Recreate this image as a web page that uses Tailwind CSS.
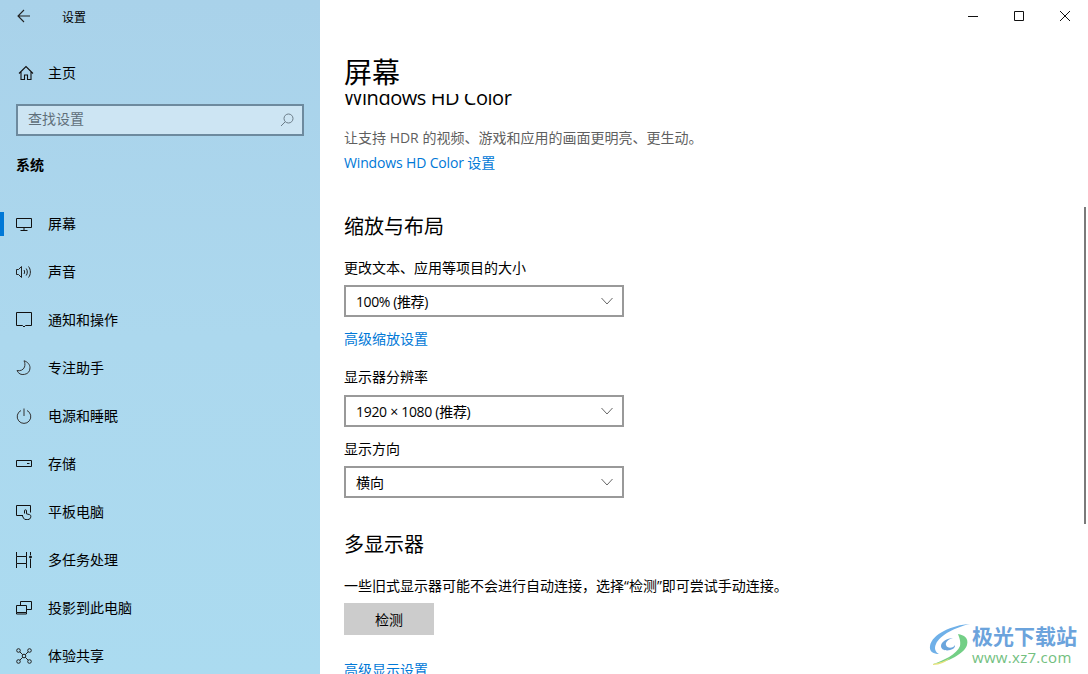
<!DOCTYPE html>
<html lang="zh-CN">
  <head>
    <meta charset="UTF-8" />
    <title>设置</title>
    <script src="https://cdn.jsdelivr.net/npm/@tailwindcss/browser@4"></script>
  </head>
  <body class="relative flex h-[674px] w-[1088px] overflow-hidden bg-white font-['Open_Sans','Noto_Sans_CJK_SC',sans-serif] text-[14px] text-black">
    <!-- sidebar -->
    <aside class="flex h-full w-[320px] shrink-0 flex-col overflow-hidden bg-linear-to-b from-[#a9d2ea] via-[#acd8ee] to-[#abdbf0]">
      <div class="flex h-8 shrink-0 items-center">
        <svg class="ml-[17px] h-[14px] w-[14px]" viewBox="0 0 14 14" fill="none" stroke="#222" stroke-width="1.1"><path d="M13 7H1.500M7 1 1 7l6 6" /></svg>
        <span class="ml-[31px] mt-[3px] text-[12px]">设置</span>
      </div>
      <div class="mt-[17px] flex h-[48px] items-center pl-[18px] shrink-0">
        <svg class="h-4 w-4" viewBox="0 0 16 16" fill="none" stroke="#111" stroke-width="1.1"><path d="M1 8.500 8 1.500l7 7M3 7v7.500h3.500V10h3v4.500H13V7" /></svg>
        <span class="ml-[14px] -mt-[2px]">主页</span>
      </div>
      <div class="mx-4 mt-[7px] flex h-[32px] shrink-0 items-center justify-between border-2 border-[#6d8a9e] bg-[#cde5f3] pl-[10px] pr-2">
        <span class="-mt-[4px] text-[#5f6f7a]">查找设置</span>
        <svg class="h-[14px] w-[14px]" viewBox="0 0 14 14" fill="none" stroke="#6b7c88" stroke-width="1"><circle cx="8.500" cy="5.500" r="4.500" /><path d="M5.200 8.800 1 13" /></svg>
      </div>
      <div class="ml-4 mt-[19px] h-5 shrink-0 text-[14px] leading-5 font-bold">系统</div>
      <nav class="mt-[25px] flex flex-col">
        <a class="relative flex h-12 shrink-0 items-center pl-4">
          <span class="absolute top-3 left-0 h-6 w-1 bg-[#0078d7]"></span>
          <svg class="h-4 w-4" viewBox="0 0 16 16" fill="none" stroke="#111" stroke-width="1"><path d="M.5 2.500h15v9H.5zM8 11.500v3M4.500 14.500h7" /></svg>
          <span class="ml-4 -mt-[2px]">屏幕</span>
        </a>
        <a class="flex h-12 shrink-0 items-center pl-4">
          <svg class="h-4 w-4" viewBox="0 0 16 16" fill="none" stroke="#222" stroke-width="1"><path d="M.5 5.500h2l3-3v11l-3-3h-2zM8 6c.8 1.200.8 2.800 0 4M10.200 4.500c1.500 2 1.500 5 0 7M12.500 2.500c2.500 3 2.500 8 0 11" /></svg>
          <span class="ml-4 -mt-[2px]">声音</span>
        </a>
        <a class="flex h-12 shrink-0 items-center pl-4">
          <svg class="h-4 w-4" viewBox="0 0 16 16" fill="none" stroke="#111" stroke-width="1"><path d="M.5.500h15v13H9.500L8 15l-1.500-1.500H.5z" /></svg>
          <span class="ml-4 -mt-[2px]">通知和操作</span>
        </a>
        <a class="flex h-12 shrink-0 items-center pl-4">
          <svg class="h-4 w-4" viewBox="0 0 16 16" fill="none" stroke="#333" stroke-width="1"><path d="M8 .8c3.200.8 6 3.500 6 7a6.800 6.800 0 0 1-13 2.700c3 .8 6.500-.5 7.500-3.500C9.200 4.800 9 2.500 8 .8Z" /></svg>
          <span class="ml-4 -mt-[2px]">专注助手</span>
        </a>
        <a class="flex h-12 shrink-0 items-center pl-4">
          <svg class="h-4 w-4" viewBox="0 0 16 16" fill="none" stroke="#333" stroke-width="1"><path d="M8 .5v7.500M5 2.500a6.800 6.800 0 1 0 6 0" /></svg>
          <span class="ml-4 -mt-[2px]">电源和睡眠</span>
        </a>
        <a class="flex h-12 shrink-0 items-center pl-4">
          <svg class="h-4 w-4" viewBox="0 0 16 16" fill="none" stroke="#111" stroke-width="1"><path d="M.5 4.500h15v6H.5zM11 7.500h2.500" /></svg>
          <span class="ml-4 -mt-[2px]">存储</span>
        </a>
        <a class="flex h-12 shrink-0 items-center pl-4">
          <svg class="h-4 w-4" viewBox="0 0 16 16" fill="none" stroke="#111" stroke-width="1"><path d="M7 11.500H.5v-10h14v7M8.500 9.500V6.800a1 1 0 0 1 2 0v3l3 .8c1 .3 1.500 1 1.300 2l-.3 1.200a2.800 2.800 0 0 1-2.700 1.800H10a3 3 0 0 1-2.500-1.500L6.500 12" /></svg>
          <span class="ml-4 -mt-[2px]">平板电脑</span>
        </a>
        <a class="flex h-12 shrink-0 items-center pl-4">
          <svg class="h-4 w-4" viewBox="0 0 16 16" fill="none" stroke="#111" stroke-width="1"><path d="M.5 0v4.500h10V0M.5 4.500v7h10v-7M.5 16v-4.500M10.500 16v-4.500M14.500 0v3M14.500 7v9" /><circle cx="14.500" cy="5" r="1" fill="#111" /></svg>
          <span class="ml-4 -mt-[2px]">多任务处理</span>
        </a>
        <a class="flex h-12 shrink-0 items-center pl-4">
          <svg class="h-4 w-4" viewBox="0 0 16 16" fill="none" stroke="#111" stroke-width="1"><path d="M4.500 5V1.500h11v8H11M.5 5.500h10v7H.5zM.5 12.500v1.500h10v-1.500" /></svg>
          <span class="ml-4 -mt-[2px]">投影到此电脑</span>
        </a>
        <a class="flex h-12 shrink-0 items-center pl-4">
          <svg class="h-4 w-4" viewBox="0 0 16 16" fill="none" stroke="#222" stroke-width="1"><circle cx="2.500" cy="2.500" r="1.800" /><circle cx="13.500" cy="2.500" r="1.800" /><circle cx="2.500" cy="13.500" r="1.800" /><circle cx="13.500" cy="13.500" r="1.800" /><circle cx="8" cy="8" r="1.800" /><path d="m3.800 3.800 3 3M12.200 3.800l-3 3M3.800 12.200l3-3M12.200 12.200l-3-3" /></svg>
          <span class="ml-4 -mt-[2px]">体验共享</span>
        </a>
      </nav>
    </aside>

    <!-- main pane -->
    <main class="flex h-full min-w-0 flex-1 flex-col">
      <div class="flex h-8 shrink-0 justify-end">
        <button class="flex h-8 w-[46px] items-center justify-center"><svg class="h-[10px] w-[10px]" viewBox="0 0 10 10" stroke="#111"><path d="M0 5.500h10" /></svg></button>
        <button class="flex h-8 w-[46px] items-center justify-center"><svg class="h-[10px] w-[10px]" viewBox="0 0 10 10" fill="none" stroke="#111"><path d="M.5.500h9v9h-9z" /></svg></button>
        <button class="flex h-8 w-[46px] items-center justify-center"><svg class="h-[10px] w-[10px]" viewBox="0 0 10 10" stroke="#111"><path d="m0 0 10 10M10 0 0 10" /></svg></button>
      </div>
      <h1 class="ml-6 h-[62px] shrink-0 pt-[20px] text-[28px] leading-[40px]">屏幕</h1>
      <div class="min-h-0 flex-1 overflow-hidden pl-6">
        <h2 class="-mt-[11px] h-[30px] text-[20px] leading-[30px] tracking-[-0.45px]">Windows HD Color</h2>
        <p class="mt-[15px] h-5 leading-5 text-[#5f5f5f]">让支持 HDR 的视频、游戏和应用的画面更明亮、更生动。</p>
        <a class="mt-[5px] block h-5 leading-5 tracking-[-0.15px] text-[#0078d7]">Windows HD Color 设置</a>
        <h2 class="mt-[39px] h-[30px] text-[20px] leading-[30px]">缩放与布局</h2>
        <p class="mt-[16px] h-5 leading-5">更改文本、应用等项目的大小</p>
        <div class="mt-[7px] flex h-8 w-[280px] items-center justify-between border-2 border-[#999] pr-[9px] pl-[10px]">
          <span class="tracking-[-0.4px]">100% (推荐)</span>
          <svg class="h-[8px] w-[12px]" viewBox="0 0 12 8" fill="none" stroke="#666"><path d="m.5 1 5.500 6 5.500-6" /></svg>
        </div>
        <a class="mt-[12px] block h-5 leading-5 text-[#0078d7]">高级缩放设置</a>
        <p class="mt-[18px] h-5 leading-5">显示器分辨率</p>
        <div class="mt-[8px] flex h-8 w-[280px] items-center justify-between border-2 border-[#999] pr-[9px] pl-[10px]">
          <span class="tracking-[-0.3px]">1920 × 1080 (推荐)</span>
          <svg class="h-[8px] w-[12px]" viewBox="0 0 12 8" fill="none" stroke="#666"><path d="m.5 1 5.500 6 5.500-6" /></svg>
        </div>
        <p class="mt-[12px] h-5 leading-5">显示方向</p>
        <div class="mt-[7px] flex h-8 w-[280px] items-center justify-between border-2 border-[#999] pr-[9px] pl-[10px]">
          <span>横向</span>
          <svg class="h-[8px] w-[12px]" viewBox="0 0 12 8" fill="none" stroke="#666"><path d="m.5 1 5.500 6 5.500-6" /></svg>
        </div>
        <h2 class="mt-[32px] h-[30px] text-[20px] leading-[30px]">多显示器</h2>
        <p class="mt-[16px] h-5 leading-5">一些旧式显示器可能不会进行自动连接，选择“检测”即可尝试手动连接。</p>
        <button class="mt-[7px] h-8 w-[90px] bg-[#cccccc]">检测</button>
        <a class="mt-[25px] block h-5 leading-5 text-[#0078d7]">高级显示设置</a>
      </div>
    </main>

    <!-- scrollbar -->
    <div class="absolute top-[207px] left-[1084px] h-[317px] w-[2px] bg-[#7a7a7a]"></div>

    <!-- watermark -->
    <div class="absolute top-[622px] left-[928px] flex items-center">
      <svg class="h-[44px] w-[44px]" viewBox="0 0 44 44" fill="none">
        <path d="M42 2C24 3 4 12 2 24c-1 6 4 8 9 8-4-2-5-6-3-10C12 13 28 5 42 2Z" fill="#6fb0e8" />
        <path d="M13 24c0-4 6-8 12-8-4 1-8 4-7 7 1 4 8 3 9 0 1 6-14 8-14 1Z" fill="#6aa5dc" />
        <path d="M30 12c6 1 11 4 9 11-2 8-20 18-34 19 10-3 24-10 27-18 1-5-1-9-2-12Z" fill="#73cf86" />
        <path d="M5 42c6-1 12-3 17-6-4 4-10 7-17 7Z" fill="#e6e27c" />
      </svg>
      <div class="flex flex-col">
        <span class="text-[21px] leading-[26px] font-bold text-[#6ba3dc]">极光下载站</span>
        <span class="text-[15px] leading-[16px] tracking-[0.3px] text-[#73c07f]">www.xz7.com</span>
      </div>
    </div>
  </body>
</html>
